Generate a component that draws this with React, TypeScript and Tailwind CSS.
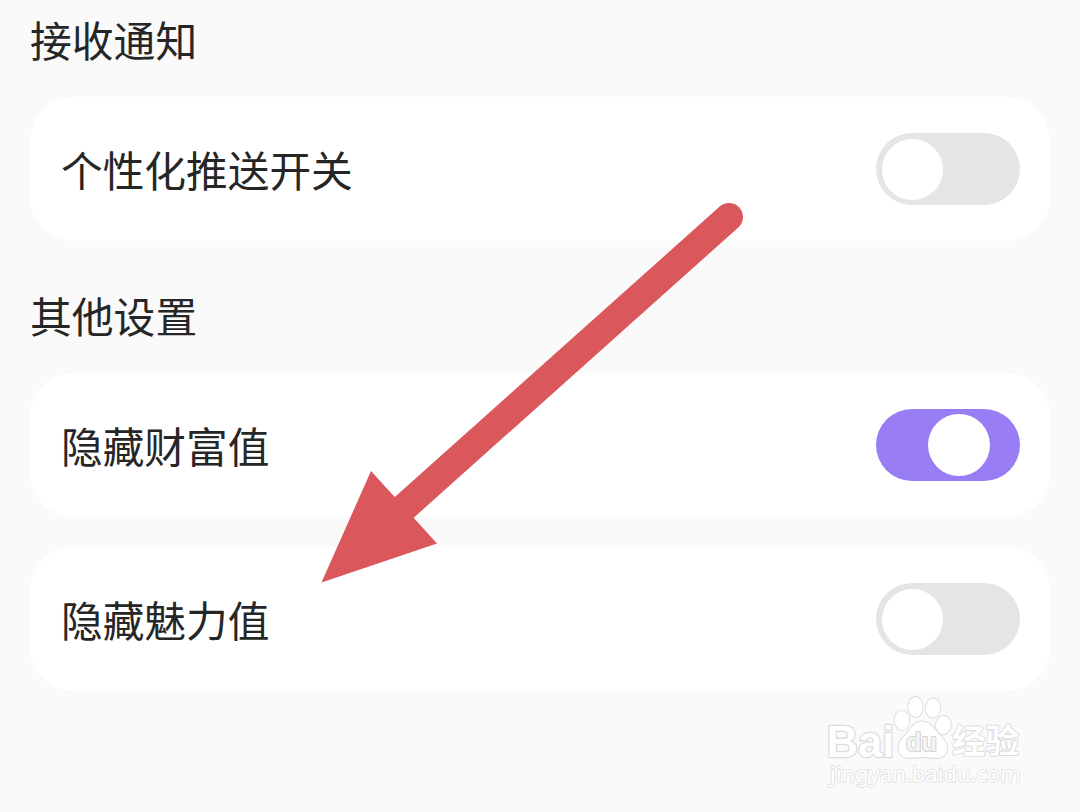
import { useState } from 'react'
import type { ReactNode } from 'react'

type SwitchProps = {
  checked: boolean
  label: string
  onChange: () => void
}

const Switch = ({ checked, label, onChange }: SwitchProps) => (
  <button
    type="button"
    role="switch"
    aria-checked={checked}
    aria-label={label}
    onClick={onChange}
    className={`flex h-[72px] w-36 shrink-0 items-center rounded-full ${
      checked ? 'justify-end bg-[#997df5] pr-[30px]' : 'justify-start bg-[#e5e5e5] pl-[6px]'
    }`}
  >
    <span className={`rounded-full bg-white ${checked ? 'size-[62px]' : 'size-[61px]'}`} />
  </button>
)

const SettingCard = ({ label, checked, onChange }: SwitchProps) => (
  <div className="flex h-36 items-center justify-between rounded-[44px] bg-white pr-[30px] pl-[31px]">
    <span className="pt-px text-[41.7px] leading-none text-[#262626]">{label}</span>
    <Switch label={label} checked={checked} onChange={onChange} />
  </div>
)

const Section = ({ title, children }: { title: string; children: ReactNode }) => (
  <section>
    <h2 className="mb-[18px] flex h-[79px] items-center text-[41.8px] leading-none text-[#262626]">
      {title}
    </h2>
    <div className="flex flex-col gap-[30px]">{children}</div>
  </section>
)

const Arrow = () => (
  <svg
    className="pointer-events-none absolute top-0 left-0"
    width="1080"
    height="812"
    viewBox="0 0 1080 812"
    fill="none"
  >
    <path d="M729 217L398 513" stroke="#da575c" strokeWidth="28" strokeLinecap="round" />
    <path d="M321.500 582.500L371 471L437 543.500Z" fill="#da575c" />
  </svg>
)

const Watermark = () => (
  <svg
    className="pointer-events-none absolute top-[680px] left-[810px]"
    width="230"
    height="120"
    viewBox="0 0 230 120"
    fill="#fff"
    stroke="#dadada"
    strokeWidth="1.8"
    strokeLinejoin="round"
    paintOrder="stroke"
  >
    <text
      x="16.500"
      y="76.500"
      fontSize="45"
      fontWeight="700"
      fontFamily="'Liberation Sans', sans-serif"
      textLength="68"
      lengthAdjust="spacingAndGlyphs"
      strokeWidth="2.400"
    >
      Bai
    </text>
    <ellipse cx="92" cy="40.500" rx="7.500" ry="9.500" transform="rotate(-8 92 40.500)" />
    <ellipse cx="105.500" cy="27" rx="7.300" ry="10" />
    <ellipse cx="123" cy="28" rx="7.200" ry="9.600" transform="rotate(8 123 28)" />
    <ellipse cx="133.500" cy="45" rx="7.500" ry="9.300" transform="rotate(5 133.500 45)" />
    <path d="M112 41.500C105 41.500 101 48 97 53C93 58 88 61 88.500 69C89 75 93 78 99 78C104 78 108 77 113 77C118 77 122 78 127 78C133 78 137 74 137 68C137 61 131 57 127 52C123 47 119 41.500 112 41.500Z" />
    <text
      x="96"
      y="71"
      fontSize="26"
      fontFamily="'Liberation Sans', sans-serif"
      fontWeight="700"
      textLength="31"
      lengthAdjust="spacingAndGlyphs"
      fill="#f4f4f4"
      stroke="#d4d4d4"
      strokeWidth="2.200"
    >
      du
    </text>
    <text
      x="142"
      y="73"
      fontSize="33"
      fontWeight="700"
      fontFamily="'Noto Sans CJK SC', sans-serif"
      textLength="67"
      lengthAdjust="spacingAndGlyphs"
    >
      经验
    </text>
    <text
      x="20"
      y="102"
      fontSize="21"
      fontFamily="'Noto Sans', sans-serif"
      textLength="191"
      lengthAdjust="spacingAndGlyphs"
      stroke="#e0e0e0"
      strokeWidth="1.600"
    >
      jingyan.baidu.com
    </text>
  </svg>
)

export default function App() {
  const [push, setPush] = useState(false)
  const [hideWealth, setHideWealth] = useState(true)
  const [hideCharm, setHideCharm] = useState(false)

  return (
    <main className="relative h-[812px] w-[1080px] overflow-hidden bg-[#fafafa] px-[30px] font-['Noto_Sans_CJK_SC',sans-serif]">
      <div className="flex flex-col gap-[35px]">
        <Section title="接收通知">
          <SettingCard label="个性化推送开关" checked={push} onChange={() => setPush(!push)} />
        </Section>

        <Section title="其他设置">
          <SettingCard
            label="隐藏财富值"
            checked={hideWealth}
            onChange={() => setHideWealth(!hideWealth)}
          />
          <SettingCard
            label="隐藏魅力值"
            checked={hideCharm}
            onChange={() => setHideCharm(!hideCharm)}
          />
        </Section>
      </div>

      <Arrow />
      <Watermark />
    </main>
  )
}
